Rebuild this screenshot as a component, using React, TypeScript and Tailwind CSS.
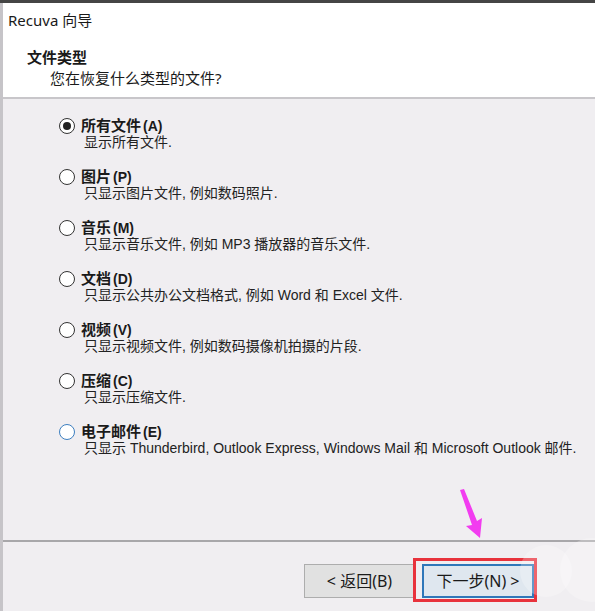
import React from 'react'

const options = [
  { label: '所有文件', key: '(A)', desc: '显示所有文件.', checked: true },
  { label: '图片', key: '(P)', desc: '只显示图片文件, 例如数码照片.' },
  { label: '音乐', key: '(M)', desc: '只显示音乐文件, 例如 MP3 播放器的音乐文件.' },
  { label: '文档', key: '(D)', desc: '只显示公共办公文档格式, 例如 Word 和 Excel 文件.' },
  { label: '视频', key: '(V)', desc: '只显示视频文件, 例如数码摄像机拍摄的片段.' },
  { label: '压缩', key: '(C)', desc: '只显示压缩文件.' },
  { label: '电子邮件', key: '(E)', desc: '只显示 Thunderbird, Outlook Express,  Windows Mail 和 Microsoft Outlook 邮件.', hover: true },
]

const Radio = ({ checked, hover }: { checked?: boolean; hover?: boolean }) => (
  <span
    className={`flex h-[16px] w-[16px] shrink-0 items-center justify-center rounded-full border bg-white ${
      hover ? 'border-[#3d7fc0]' : 'border-[#333]'
    }`}
  >
    {checked && <span className="h-[8px] w-[8px] rounded-full bg-[#222]" />}
  </span>
)

export default function App() {
  return (
    <div
      className="relative h-[611px] w-[595px] overflow-hidden bg-[#f0eef1] text-[#1a1a1a]"
      style={{ fontFamily: '"Noto Sans", "Noto Sans CJK SC", sans-serif' }}
    >
      <div className="h-[3px] bg-[#454545]" />
      <div className="flex h-[608px] border-l-[3px] border-[#c6c4c8]">
        <div className="flex flex-1 flex-col">
          {/* Header */}
          <div className="h-[94px] bg-white pl-[5px]">
            <div className="pt-[7px] text-[15px] leading-[20px]">Recuva 向导</div>
            <div className="mt-[17px] pl-[19px] text-[15px] font-bold leading-[20px]">文件类型</div>
            <div className="mt-[1px] pl-[42px] text-[15px] leading-[20px]">您在恢复什么类型的文件?</div>
          </div>
          <div className="h-[2px] bg-[#c8c6ca]" />

          {/* Options */}
          <div
            className="flex h-[441px] flex-col gap-[17px] pl-[56px] pt-[18px]"
            style={{ fontFamily: '"Liberation Sans", "Noto Sans CJK SC", sans-serif' }}
          >
            {options.map((o) => (
              <div key={o.key} className="flex flex-col">
                <div className="flex h-[17px] items-center gap-[6px]">
                  <Radio checked={o.checked} hover={o.hover} />
                  <span className="text-[15px] font-bold leading-[17px]">
                    {o.label}
                    <span className="ml-[2px] text-[14px]">{o.key}</span>
                  </span>
                </div>
                <div className="h-[17px] pl-[25px] text-[14px] leading-[17px] text-[#222]">{o.desc}</div>
              </div>
            ))}
          </div>

          <div className="h-[2px] bg-[#a8a7aa]" />

          {/* Footer */}
          <div className="flex flex-1 items-start justify-end gap-[7px] pr-[61px] pt-[22px]">
            <button className="h-[34px] w-[111px] border border-[#adadad] bg-[#e1e1e1] text-[16px]">
              &lt; 返回(B)
            </button>
            <button className="h-[34px] w-[112px] border-2 border-[#2f77b9] bg-[#dfe7ef] text-[16px]">
              下一步(N) &gt;
            </button>
          </div>
        </div>
      </div>

      {/* Annotation: red box */}
      <div className="absolute left-[413px] top-[558px] h-[44px] w-[124px] border-[3px] border-[#e8323c]" />

      {/* Annotation: magenta arrow */}
      <svg className="absolute left-[450px] top-[485px]" width="45" height="58" viewBox="0 0 45 58">
        <polygon points="10,5 14,4 27,36 32,33 30,53 16,41 22,40" fill="#f23cf0" />
      </svg>

      {/* Watermark circles */}
      <div className="absolute left-[520px] top-[545px] h-[52px] w-[52px] rounded-full bg-white/25" />
      <div className="absolute left-[560px] top-[538px] h-[64px] w-[64px] rounded-full bg-white/25" />
    </div>
  )
}
